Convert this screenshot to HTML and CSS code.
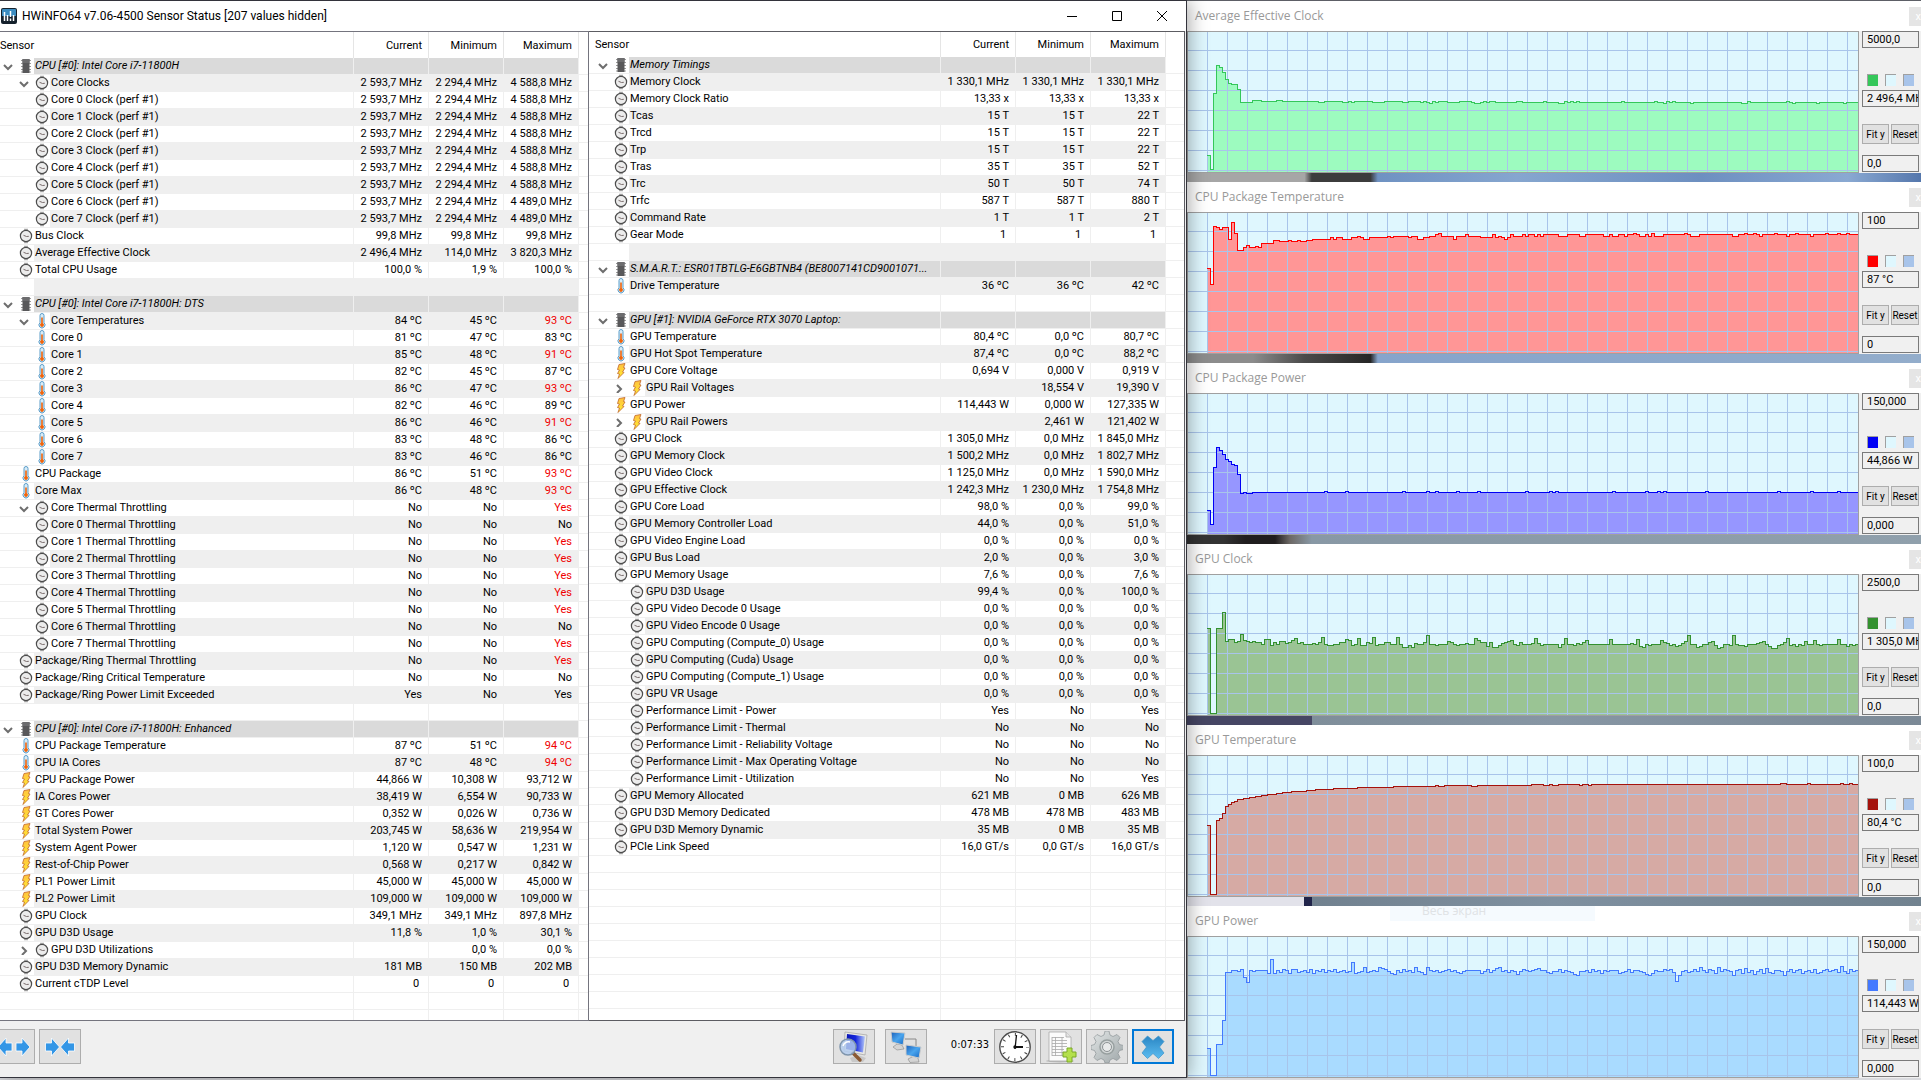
FILE: index.html
```
<!DOCTYPE html>
<html lang="en">
<head>
    <meta charset="UTF-8">
    <meta name="viewport" content="width=device-width, initial-scale=1.0">
    <title>HWiNFO64 Sensor Status</title>
    <link rel="stylesheet" href="styles.css">
</head>
<body>
    <svg class="sprites" aria-hidden="true">
        <defs>
            <linearGradient id="screen" x1="0" y1="0" x2="1" y2="1">
                <stop offset="0" stop-color="#1c5fb8"/>
                <stop offset="0.5" stop-color="#4aa5ee"/>
                <stop offset="1" stop-color="#1668c4"/>
            </linearGradient>
            <linearGradient id="cross" x1="0" y1="0" x2="0" y2="1">
                <stop offset="0" stop-color="#2a86c4"/>
                <stop offset="1" stop-color="#5cbcf0"/>
            </linearGradient>
            <linearGradient id="deep" x1="0" y1="0" x2="1" y2="0">
                <stop offset="0" stop-color="#0a14b4"/>
                <stop offset="0.5" stop-color="#1426dc"/>
                <stop offset="1" stop-color="#b4c8f8"/>
            </linearGradient>
            <linearGradient id="steel" x1="0" y1="0" x2="1" y2="1">
                <stop offset="0" stop-color="#e2e6e6"/>
                <stop offset="1" stop-color="#9ea6a8"/>
            </linearGradient>
            <linearGradient id="gold" x1="0" y1="0" x2="0" y2="1">
                <stop offset="0" stop-color="#ffc040"/>
                <stop offset="1" stop-color="#ffee30"/>
            </linearGradient>
        </defs>
        <symbol id="i-chip" viewBox="0 0 14 16">
            <path d="M2 2.500h10M2 5.500h10M2 8.500h10M2 11.500h10M2 14h10" stroke="#9a9a9a" stroke-width="1"/>
            <path d="M3.500 1h7v14h-7z" fill="#58585a"/>
            <path d="M3.500 1h7v4h-7z" fill="#6c6c6e"/>
        </symbol>
        <symbol id="i-clock" viewBox="0 0 14 16">
            <path d="M5 1.500h4M5 14.500h4" stroke="#aaa" stroke-width="1.500"/>
            <circle cx="7" cy="8" r="5.600" fill="#ececec" stroke="#4c4c4c" stroke-width="1.200"/>
            <path d="M4.500 7.300l3 1.200 2.300-.2" fill="none" stroke="#7a6c6c" stroke-width="1"/>
        </symbol>
        <symbol id="i-temp" viewBox="0 0 14 16">
            <path d="M5 2.500a2 2 0 0 1 4 0v7.200a3 3 0 1 1-4 0z" fill="#d8ecf8" stroke="#5a9cc8" stroke-width="1"/>
            <path d="M6.200 4.500h1.600v5.800a1.800 1.800 0 1 1-1.600 0z" fill="#f0640c"/>
        </symbol>
        <symbol id="i-volt" viewBox="0 0 14 16">
            <path d="M5 1.500L11 .5 9.500 4.500 11 5 8.500 9 10 9.500 4 15.500 5.500 11 3.500 10.500 5.500 7 3.500 6.500z" fill="url(#gold)" stroke="#c0662c" stroke-width=".8"/>
        </symbol>
    </svg>

    <main class="desktop">
        <section class="sensors">
            <header class="titlebar">
                <svg class="logo" viewBox="0 0 16 16" aria-hidden="true">
                    <rect width="16" height="16" rx="2" fill="#15212c"/>
                    <path d="M1 2q0-1 1-1h12q1 0 1 1v6H1z" fill="#3b8cc0"/>
                    <path d="M3.500 4v9M6.500 7v6M9.500 3v6M12.500 7v6M9.500 10.500V13" stroke="#fff" stroke-width="1.500"/>
                </svg>
                <h1>HWiNFO64 v7.06-4500 Sensor Status [207 values hidden]</h1>
                <div class="window-buttons">
                    <button type="button" aria-label="Minimize"><svg viewBox="0 0 12 12"><path d="M1 6.500h10"/></svg></button>
                    <button type="button" aria-label="Maximize"><svg viewBox="0 0 12 12"><path d="M1.500 1.500h9v9h-9z"/></svg></button>
                    <button type="button" aria-label="Close"><svg viewBox="0 0 12 12"><path d="M1 1l10 10M11 1L1 11"/></svg></button>
                </div>
            </header>

            <div class="panels">
                <div class="panel panel-left">
                    <table>
                        <colgroup><col><col class="value"><col class="value"><col class="value"><col class="rest"></colgroup>
                        <thead>
                            <tr><th>Sensor</th><th>Current</th><th>Minimum</th><th>Maximum</th><td></td></tr>
                        </thead>
                        <tbody id="left-rows"></tbody>
                    </table>
                </div>
                <div class="panel panel-right">
                    <table>
                        <colgroup><col><col class="value"><col class="value"><col class="value"><col class="rest"></colgroup>
                        <thead>
                            <tr><th>Sensor</th><th>Current</th><th>Minimum</th><th>Maximum</th><td></td></tr>
                        </thead>
                        <tbody id="right-rows"></tbody>
                    </table>
                </div>
            </div>

            <footer class="toolbar">
                <button type="button" class="tool cut" aria-label="Expand columns">
                    <svg viewBox="0 0 32 32"><path d="M0 16l8-9v5h6v8H8v5zM32 16l-8-9v5h-6v8h6v5z" fill="#3396e6" stroke="#fff" stroke-width=".8"/></svg>
                </button>
                <button type="button" class="tool" aria-label="Shrink columns">
                    <svg viewBox="0 0 32 32"><path d="M15.500 16l-8-9v5h-6v8h6v5zM16.500 16l8-9v5h6v8h-6v5z" fill="#3396e6" stroke="#fff" stroke-width=".8"/></svg>
                </button>
                <span class="spacer"></span>
                <button type="button" class="tool" aria-label="System summary">
                    <svg viewBox="0 0 32 32">
                        <path d="M12 27l8-3 8 3-3 4H14z" fill="#c8c8c8"/>
                        <path d="M7 1l22 3-2 20-21-4z" fill="#e8e8e4" stroke="#aaa" stroke-width=".8"/>
                        <path d="M9 3l18 2.500-2 16L8 18z" fill="url(#deep)"/>
                        <path d="M15 22l7 7" stroke="#8a5a34" stroke-width="3.500" stroke-linecap="round"/>
                        <circle cx="10" cy="16" r="8" fill="#b4cdee" fill-opacity=".85" stroke="#7f95ac" stroke-width="1.500"/>
                        <path d="M5 15q2-5 7-4" fill="none" stroke="#fff" stroke-width="1.500"/>
                    </svg>
                </button>
                <button type="button" class="tool network" aria-label="Remote sensors">
                    <svg viewBox="0 0 32 32">
                        <path d="M15 8h11v8" fill="none" stroke="#888" stroke-width="1"/>
                        <path d="M3 16l4-3 5 1 2 4-7 1z" fill="#d4d4d4" stroke="#777" stroke-width=".5"/>
                        <path d="M1 1l14 1-2 12L2 11z" fill="url(#screen)" stroke="#ccc" stroke-width="1"/>
                        <path d="M18 28l6-3 4 2 1 4-9 .5z" fill="#d4d4d4" stroke="#777" stroke-width=".5"/>
                        <path d="M16 14l15 2-2 11-13-3z" fill="url(#screen)" stroke="#ccc" stroke-width="1"/>
                    </svg>
                </button>
                <time class="elapsed">0:07:33</time>
                <button type="button" class="tool" aria-label="Reset clock">
                    <svg viewBox="0 0 32 32">
                        <circle cx="16" cy="16" r="15.200" fill="#fff" stroke="#4c4c4c" stroke-width="1.400"/>
                        <circle cx="16" cy="16" r="12.500" fill="none" stroke="#444" stroke-width="3" stroke-dasharray="1 5.545" stroke-dashoffset=".5"/>
                        <path d="M16 16h8" stroke="#111" stroke-width="2"/>
                        <path d="M16 18l1.500-14" stroke="#111" stroke-width="1.300"/>
                        <circle cx="16" cy="16" r="1.700" fill="#111"/>
                    </svg>
                </button>
                <button type="button" class="tool" aria-label="Log to file">
                    <svg viewBox="0 0 32 32">
                        <ellipse cx="15" cy="30" rx="14" ry="1.500" fill="#bbb"/>
                        <path d="M4 1h17l5 5v24H4z" fill="#fbfbfb" stroke="#aaa" stroke-width=".8"/>
                        <path d="M21 1v5h5" fill="#e4e4e4" stroke="#aaa" stroke-width=".8"/>
                        <path d="M7 6.500h12M7 9.500h15M7 12.500h15M7 15.500h15M7 18.500h12M7 21.500h12M7 24.500h12M7 6v19M10.500 6v19M17 6v19" stroke="#a8a8a8" stroke-width=".8"/>
                        <path d="M22 17h5v4h4v5h-4v5h-5v-5h-4v-5h4z" fill="#b4e04c" stroke="#7aa828" stroke-width="1"/>
                    </svg>
                </button>
                <button type="button" class="tool" aria-label="Settings">
                    <svg viewBox="0 0 32 32">
                        <path d="M13 4l1-4h4l1 4 3 1.500 4-2 3 3-2 4 1.500 3 4 1v4l-4 1-1.500 3 2 4-3 3-4-2-3 1.500-1 3h-4l-1-3-3-1.500-4 2-3-3 2-4L3.500 19.500 0 18.500v-4l3.500-1 1.500-3-2-4 3-3 4 2z" fill="url(#steel)" stroke="#8c9496" stroke-width=".7"/>
                        <circle cx="16" cy="16" r="7" fill="#d4d8d8" stroke="#98a0a0" stroke-width="1.500"/>
                        <circle cx="16" cy="16" r="4.500" fill="#e8eaea" stroke="#8c9294" stroke-width="1"/>
                    </svg>
                </button>
                <button type="button" class="tool active" aria-label="Close sensors">
                    <svg viewBox="0 0 32 32"><path d="M5 10.500L10.500 5 16 9.500 21.500 5 27 10.500 22.500 16 27 22 21.500 27.500 16 22.500 10.500 27.500 5 22 9.500 16z" fill="url(#cross)" stroke="#3f93c8" stroke-width=".7"/></svg>
                </button>
            </footer>
        </section>

        <section class="graphs" id="graphs"></section>
    </main>
    <script src="script.js"></script>
</body>
</html>
```
FILE: styles.css
```
* {
    box-sizing: border-box;
}

body {
    margin: 0;
    font-family: Roboto, "Liberation Sans", sans-serif;
    font-size: 11px;
    color: #000;
    background: #d9dade;
    overflow: hidden;
}

button,
input {
    font: inherit;
    color: inherit;
    padding: 0;
    margin: 0;
    border-radius: 0;
}

.sprites {
    position: absolute;
    width: 0;
    height: 0;
}

.desktop {
    display: grid;
    grid-template-columns: 1187fr 734fr;
    height: 100vh;
    padding-bottom: 2px;
}

/* sensor window */
.sensors {
    display: flex;
    flex-direction: column;
    min-width: 0;
    min-height: 0;
    position: relative;
    z-index: 1;
    background: #f0f0f0;
    border: 1px solid #33333b;
    border-left: 0;
    box-shadow: 2px 0 18px rgba(0, 0, 0, 0.35);
}

.titlebar {
    display: flex;
    align-items: center;
    height: 30px;
    padding-left: 1px;
    background: #fff;
}

.logo {
    width: 16px;
    height: 16px;
    margin-right: 5px;
}

h1,
h2 {
    margin: 0;
    font-size: 12px;
    font-weight: 400;
}

.window-buttons {
    display: flex;
    margin: 0 2px 0 auto;
}

.window-buttons button {
    width: 45px;
    height: 30px;
    border: 0;
    background: none;
}

.window-buttons svg {
    width: 12px;
    height: 12px;
    display: block;
    margin: 0 auto;
    fill: none;
    stroke: #000;
}

.panels {
    flex: 1;
    display: grid;
    grid-template-columns: 589fr 597fr;
    min-height: 0;
}

.panel {
    overflow: hidden;
    background: #fff;
    border: 1px solid #74747e;
    border-left: 0;
}

.panel-right {
    border-color: #5c5c62;
    margin-right: 1px;
}

table {
    width: 100%;
    table-layout: fixed;
    border-collapse: separate;
    border-spacing: 0;
}

col.value {
    width: 75px;
}

.panel-left col.rest {
    width: 9px;
}

.panel-right col.rest {
    width: 18px;
}

thead tr {
    height: 26px;
}

.panel-right thead tr {
    height: 25px;
}

th {
    padding: 0 6px 0 0;
    font-weight: 400;
    text-align: right;
    border-right: 1px solid #e5e5e5;
}

th:first-child {
    text-align: left;
}

.panel-right th:first-child {
    padding-left: 6px;
}

tbody tr {
    height: 17px;
}

tbody td {
    height: 17px;
    padding: 0 6px 0 0;
    line-height: 16px;
    text-align: right;
    white-space: nowrap;
    border-right: 1px solid #efefef;
    border-bottom: 1px solid #efefef;
}

tbody td:first-child {
    padding: 0;
    text-align: left;
}

tbody td:last-child {
    padding: 0;
    border-right: 0;
    background: #fff;
}

tr.striped .label,
tr.striped td.number {
    background: #efefef;
}

tr.group .label,
tr.group td.number {
    background: #dadada;
}

tr.group .label {
    font-style: italic;
}

.name {
    display: flex;
    height: 16px;
}

.slot {
    flex: none;
    width: 18px;
    padding-right: 5px;
    text-align: right;
}

.nested .slot {
    width: 34px;
}

.panel-right .slot {
    width: 24px;
}

.panel-right .nested .slot {
    width: 40px;
}

.toggle {
    display: block;
    width: 10px;
    height: 16px;
    margin-left: auto;
    border: 0;
    background: none;
}

.toggle svg {
    display: block;
    width: 10px;
    height: 10px;
    fill: none;
    stroke: #6e6e6e;
    stroke-width: 2;
}

.icon {
    flex: none;
    width: 14px;
    height: 16px;
    margin: 0 1px;
}

.label {
    flex: 1;
    min-width: 0;
    padding: 0 2px 0 1px;
    overflow: hidden;
    text-overflow: ellipsis;
}

.alert {
    color: #f00000;
}

/* toolbar */
.toolbar {
    display: flex;
    align-items: flex-start;
    gap: 4px;
    height: 56px;
    padding: 8px 12px 0 0;
    overflow: hidden;
}

.tool {
    flex: none;
    display: flex;
    align-items: center;
    justify-content: center;
    width: 42px;
    height: 35px;
    border: 1px solid #adadad;
    background: #e1e1e1;
}

.tool svg {
    width: 32px;
    height: 32px;
}

.tool.cut {
    margin-left: -7px;
}

.tool.network {
    margin-left: 6px;
}

.tool.active {
    border: 2px solid #0078d7;
}

.spacer {
    flex: 1;
}

.elapsed {
    padding: 0 1px 0 20px;
    font-family: "DejaVu Sans Condensed", "DejaVu Sans", sans-serif;
    line-height: 32px;
}

/* graph windows */
.graphs {
    display: flex;
    flex-direction: column;
    min-width: 0;
    padding-top: 1px;
    background: #5d5f66;
    overflow: hidden;
}

.graph {
    flex: none;
    position: relative;
    background: #f0f0f0;
}

.graph header {
    display: flex;
    align-items: center;
    justify-content: space-between;
    height: 30px;
    padding-left: 8px;
    background: #fff;
}

.graph h2 {
    color: #999;
    font-family: "Open Sans", "Noto Sans", sans-serif;
    line-height: 20px;
}

.close {
    width: 12px;
    height: 19px;
    border: 0;
    background: #e5e5e5;
    color: #fff;
    text-align: right;
}

.graph-body {
    display: flex;
    height: 142px;
}

.plot {
    flex: 1;
    min-width: 0;
    display: block;
    height: 142px;
    border: 1px solid #a0a0a0;
    background: #dff7fe;
}

.plot path {
    fill: none;
    shape-rendering: crispEdges;
    vector-effect: non-scaling-stroke;
}

.plot .grid {
    stroke: #a8c4ea;
}

.controls {
    flex: none;
    display: flex;
    flex-direction: column;
    width: 62px;
    padding: 0 2px 0 3px;
}

.controls input {
    width: 57px;
    height: 17px;
    padding: 0 0 0 4px;
    border: 1px solid #7a7a7a;
    background: #f0f0f0;
}

.swatches {
    display: flex;
    gap: 7px;
    padding: 26px 0 4px 5px;
}

.swatches button {
    width: 11px;
    height: 12px;
    border: 0;
    border-top: 1px solid #a0a0a0;
    border-left: 1px solid #a0a0a0;
}

.range {
    display: flex;
    gap: 2px;
    padding: 17px 0 11px;
}

.range button {
    height: 20px;
    width: 27px;
    border: 1px solid #adadad;
    background: #e1e1e1;
    font-size: 10px;
    white-space: nowrap;
}

.range button:last-child {
    width: 28px;
}

/* wallpaper showing between the windows */
.wallpaper {
    flex: none;
    height: 9px;
    background: linear-gradient(90deg, #a6a6a6 0 16%, #3c3c3c 17% 25%, #6f92c2 26%, #86a6cf 45%, #6d8fc0 70%, #8aa9d2 90%, #5577ac);
}

.wallpaper.second {
    background: linear-gradient(90deg, #8c8c8c 0 9%, #4a4a4a 16%, #262626 25%, #86a4cb 26%, #93adcb);
}

.wallpaper.third {
    background: linear-gradient(90deg, #333 0 5%, #201d1e 8% 12%, #6c6865 14%, #8898a5 17%, #90a0ac);
}

.wallpaper.fourth {
    background: linear-gradient(90deg, #464664 0 17%, #7f8e9a 17%, #8796a4 50%, #7b8996);
}

.wallpaper.fifth {
    background: linear-gradient(90deg, #e2e2ea 0 16%, #20244a 16% 17%, #71818f 17%, #7f90a0 50%, #71828f);
}

/* fading menu caption over the last window */
.ghost {
    position: absolute;
    top: 0;
    left: 203px;
    width: 205px;
    height: 15px;
    padding-left: 32px;
    background: #f5fafe;
    color: #dfe2e5;
    font-family: "Open Sans", "Noto Sans", sans-serif;
    font-size: 12px;
    line-height: 10px;
}
```
FILE: script.js
```
// level | icon | name | current | minimum | maximum
// level: g = group, 0 = sensor, 1 = nested, v / > = nested with open / closed arrow, ! = red value
const left = `
g|chip|CPU [#0]: Intel Core i7-11800H
v|clock|Core Clocks|2 593,7 MHz|2 294,4 MHz|4 588,8 MHz
1|clock|Core 0 Clock (perf #1)|2 593,7 MHz|2 294,4 MHz|4 588,8 MHz
1|clock|Core 1 Clock (perf #1)|2 593,7 MHz|2 294,4 MHz|4 588,8 MHz
1|clock|Core 2 Clock (perf #1)|2 593,7 MHz|2 294,4 MHz|4 588,8 MHz
1|clock|Core 3 Clock (perf #1)|2 593,7 MHz|2 294,4 MHz|4 588,8 MHz
1|clock|Core 4 Clock (perf #1)|2 593,7 MHz|2 294,4 MHz|4 588,8 MHz
1|clock|Core 5 Clock (perf #1)|2 593,7 MHz|2 294,4 MHz|4 588,8 MHz
1|clock|Core 6 Clock (perf #1)|2 593,7 MHz|2 294,4 MHz|4 489,0 MHz
1|clock|Core 7 Clock (perf #1)|2 593,7 MHz|2 294,4 MHz|4 489,0 MHz
0|clock|Bus Clock|99,8 MHz|99,8 MHz|99,8 MHz
0|clock|Average Effective Clock|2 496,4 MHz|114,0 MHz|3 820,3 MHz
0|clock|Total CPU Usage|100,0 %|1,9 %|100,0 %
-
g|chip|CPU [#0]: Intel Core i7-11800H: DTS
v|temp|Core Temperatures|84 °C|45 °C|!93 °C
1|temp|Core 0|81 °C|47 °C|83 °C
1|temp|Core 1|85 °C|48 °C|!91 °C
1|temp|Core 2|82 °C|45 °C|87 °C
1|temp|Core 3|86 °C|47 °C|!93 °C
1|temp|Core 4|82 °C|46 °C|89 °C
1|temp|Core 5|86 °C|46 °C|!91 °C
1|temp|Core 6|83 °C|48 °C|86 °C
1|temp|Core 7|83 °C|46 °C|86 °C
0|temp|CPU Package|86 °C|51 °C|!93 °C
0|temp|Core Max|86 °C|48 °C|!93 °C
v|clock|Core Thermal Throttling|No|No|!Yes
1|clock|Core 0 Thermal Throttling|No|No|No
1|clock|Core 1 Thermal Throttling|No|No|!Yes
1|clock|Core 2 Thermal Throttling|No|No|!Yes
1|clock|Core 3 Thermal Throttling|No|No|!Yes
1|clock|Core 4 Thermal Throttling|No|No|!Yes
1|clock|Core 5 Thermal Throttling|No|No|!Yes
1|clock|Core 6 Thermal Throttling|No|No|No
1|clock|Core 7 Thermal Throttling|No|No|!Yes
0|clock|Package/Ring Thermal Throttling|No|No|!Yes
0|clock|Package/Ring Critical Temperature|No|No|No
0|clock|Package/Ring Power Limit Exceeded|Yes|No|Yes
-
g|chip|CPU [#0]: Intel Core i7-11800H: Enhanced
0|temp|CPU Package Temperature|87 °C|51 °C|!94 °C
0|temp|CPU IA Cores|87 °C|48 °C|!94 °C
0|volt|CPU Package Power|44,866 W|10,308 W|93,712 W
0|volt|IA Cores Power|38,419 W|6,554 W|90,733 W
0|volt|GT Cores Power|0,352 W|0,026 W|0,736 W
0|volt|Total System Power|203,745 W|58,636 W|219,954 W
0|volt|System Agent Power|1,120 W|0,547 W|1,231 W
0|volt|Rest-of-Chip Power|0,568 W|0,217 W|0,842 W
0|volt|PL1 Power Limit|45,000 W|45,000 W|45,000 W
0|volt|PL2 Power Limit|109,000 W|109,000 W|109,000 W
0|clock|GPU Clock|349,1 MHz|349,1 MHz|897,8 MHz
0|clock|GPU D3D Usage|11,8 %|1,0 %|30,1 %
>|clock|GPU D3D Utilizations||0,0 %|0,0 %
0|clock|GPU D3D Memory Dynamic|181 MB|150 MB|202 MB
0|clock|Current cTDP Level|0 |0 |0 `;

const right = `
g|chip|Memory Timings
0|clock|Memory Clock|1 330,1 MHz|1 330,1 MHz|1 330,1 MHz
0|clock|Memory Clock Ratio|13,33 x|13,33 x|13,33 x
0|clock|Tcas|15 T|15 T|22 T
0|clock|Trcd|15 T|15 T|22 T
0|clock|Trp|15 T|15 T|22 T
0|clock|Tras|35 T|35 T|52 T
0|clock|Trc|50 T|50 T|74 T
0|clock|Trfc|587 T|587 T|880 T
0|clock|Command Rate|1 T|1 T|2 T
0|clock|Gear Mode|1 |1 |1 
-
g|chip|S.M.A.R.T.: ESR01TBTLG-E6GBTNB4 (BE8007141CD9001071...
0|temp|Drive Temperature|36 °C|36 °C|42 °C
-
g|chip|GPU [#1]: NVIDIA GeForce RTX 3070 Laptop:
0|temp|GPU Temperature|80,4 °C|0,0 °C|80,7 °C
0|temp|GPU Hot Spot Temperature|87,4 °C|0,0 °C|88,2 °C
0|volt|GPU Core Voltage|0,694 V|0,000 V|0,919 V
>|volt|GPU Rail Voltages||18,554 V|19,390 V
0|volt|GPU Power|114,443 W|0,000 W|127,335 W
>|volt|GPU Rail Powers||2,461 W|121,402 W
0|clock|GPU Clock|1 305,0 MHz|0,0 MHz|1 845,0 MHz
0|clock|GPU Memory Clock|1 500,2 MHz|0,0 MHz|1 802,7 MHz
0|clock|GPU Video Clock|1 125,0 MHz|0,0 MHz|1 590,0 MHz
0|clock|GPU Effective Clock|1 242,3 MHz|1 230,0 MHz|1 754,8 MHz
0|clock|GPU Core Load|98,0 %|0,0 %|99,0 %
0|clock|GPU Memory Controller Load|44,0 %|0,0 %|51,0 %
0|clock|GPU Video Engine Load|0,0 %|0,0 %|0,0 %
0|clock|GPU Bus Load|2,0 %|0,0 %|3,0 %
0|clock|GPU Memory Usage|7,6 %|0,0 %|7,6 %
1|clock|GPU D3D Usage|99,4 %|0,0 %|100,0 %
1|clock|GPU Video Decode 0 Usage|0,0 %|0,0 %|0,0 %
1|clock|GPU Video Encode 0 Usage|0,0 %|0,0 %|0,0 %
1|clock|GPU Computing (Compute_0) Usage|0,0 %|0,0 %|0,0 %
1|clock|GPU Computing (Cuda) Usage|0,0 %|0,0 %|0,0 %
1|clock|GPU Computing (Compute_1) Usage|0,0 %|0,0 %|0,0 %
1|clock|GPU VR Usage|0,0 %|0,0 %|0,0 %
1|clock|Performance Limit - Power|Yes|No|Yes
1|clock|Performance Limit - Thermal|No|No|No
1|clock|Performance Limit - Reliability Voltage|No|No|No
1|clock|Performance Limit - Max Operating Voltage|No|No|No
1|clock|Performance Limit - Utilization|No|No|Yes
0|clock|GPU Memory Allocated|621 MB|0 MB|626 MB
0|clock|GPU D3D Memory Dedicated|478 MB|478 MB|483 MB
0|clock|GPU D3D Memory Dynamic|35 MB|0 MB|35 MB
0|clock|PCIe Link Speed|16,0 GT/s|0,0 GT/s|16,0 GT/s`;

const arrows = { open: 'M1 4l4 4 4-4', closed: 'M3 2l4 4-4 4' };

function rowHtml(line, index) {
    const [level, icon = '', name = '', ...values] = line.split('|');
    const classes = [];
    if (level === 'g') classes.push('group');
    else if (index % 2) classes.push('striped');
    if ('1v>'.includes(level)) classes.push('nested');

    let toggle = '';
    if ('gv>'.includes(level)) {
        const open = level !== '>';
        toggle = `<button type="button" class="toggle" aria-expanded="${open}" aria-label="${name}">
            <svg viewBox="0 0 10 10"><path d="${open ? arrows.open : arrows.closed}"/></svg></button>`;
    }
    const cells = [0, 1, 2].map(i => {
        const value = values[i] || '';
        const alert = value.startsWith('!');
        const text = value.replace('!', '').replace(/ $/, '\u00a0').replace('°', 'º');
        return `<td class="number${alert ? ' alert' : ''}">${text}</td>`;
    });
    const picture = icon ? `<svg class="icon" aria-hidden="true"><use href="#i-${icon}"/></svg>` : '<span class="icon"></span>';
    return `<tr class="${classes.join(' ')}"><td><div class="name"><span class="slot">${toggle}</span>${picture}<span class="label">${name}</span></div></td>${cells.join('')}<td></td></tr>`;
}

function fillTable(id, text, emptyRows) {
    let html = text.slice(1).split('\n').map(rowHtml).join('');
    for (let i = 0; i < emptyRows; i++) {
        html += '<tr><td></td><td></td><td></td><td></td><td></td></tr>';
    }
    document.getElementById(id).innerHTML = html;
}

fillTable('left-rows', left, 3);
fillTable('right-rows', right, 12);

// Each series holds one height per sample, "69*4" repeats a sample four times
const graphs = [
    {
        title: 'Average Effective Clock', max: '5000,0', min: '0,0', value: '2 496,4 MHz', line: '#35c75a', fill: '#9dfbbf', gap: '',
        series: '123 137 61 33 35 40 47 51 52 52 57 70*4 68*3 69*5 68*2 69*12 70*2 69*6 70*2 69 70 69*6 70*4 69*6 70*2 69*4 70 69 70 71 69 70 69*3 70*4 69*4 70 71*2 70 69 70 69*2 70*7 69*2 70*7 69 70*4 71*2 69 70 69 70 69 70*14 69 70*10 69 70*2 71 69 70 69 70*5 71 70*16 71*2 69 70*12 69 70 71 70*7 71 70*8 71 70*8'
    },
    {
        title: 'CPU Package Temperature', max: '100', min: '0', value: '87 °C', line: '#ff0000', fill: '#ff9696', gap: 'second',
        series: '55 71 13 14 16 14 14 26 9 20 37*2 34 32 34*2 33 34 30*4 27*2 28*3 27 28*2 27 28*2 27*2 26*4 26*2 24 26 24*2 26*3 24*2 23 24 26*2 24*6 23 24 23*5 24 23*2 26*2 24*2 23*2 21 20 23*4 26 23*3 21 23*4 24*4 21 24 23 24 26 24 21*1 23*3 21 23 21*2 23 21 23 21*5 23*3 21*4 23*2 21*6 23*2 21 23*2 21*2 23 21*2 20 21 23*2 21 23 20 23*3 21*7 20 21 23*3 21*11 23*2 21*2 20 21*2 20 21 23 21*4 20 21*3 23 21*2 20 21*4 23 21*4 20 21*3 20 21*2 20 21*3 19'
    },
    {
        title: 'CPU Package Power', max: '150,000', min: '0,000', value: '44,866 W', line: '#0000f5', fill: '#9696ff', gap: 'third',
        series: '116 130 73 53 56 60 65 67 70 71 80 99 98 99*2 98*24 97 98*6 97 98*18 97 98*7 97 98*2 97 98*6 97 98*6 97 98*15 97 98*7 97 98 97 98*18 97 98*10 97 98*3 97 98 97 98*13 97 98*23 97 98*10 97 98*8 97 98*6'
    },
    {
        title: 'GPU Clock', max: '2500,0', min: '0,0', value: '1 305,0 MHz', line: '#33912f', fill: '#9ac494', gap: 'fourth',
        series: '53 138*2 53*2 37 66 64 64 67 66 59 65 66 67 66 67*2 69 64 64 70 67 69 66 66 68 67 65 63 68 67 69*3 68 69 67 62 69 70*2 69*2 67 67 64 65 70 69 63 70*2 67 68 62 70 69*2 67 67 69*2 62 69 72 72 70 72 68 69*2 67 60 69*2 70 69*3 66 67 69 70 69*2 68 69*2 63 65 67 67 71 67 72 72 70 68 67 66 65 69 70 67 69*3 68 63 68 70 69*5 72 69 63 69*2 70 68 69 67 65 69*7 64 69*6 68 69 64 71 72 69 70 69*3 65 67 68 70 69 71 70 68 66 60 69*2 72 71 69 69 67 66 70 73 72 69*2 70 60 69 70*2 71 69*3 68 67 66 69 71 73*2 70 69 67 63 70 69 71 69 70 66 69*2 65 69 70 69*5 64 69*2 71 69 70 69 68 67 66'
    },
    {
        title: 'GPU Temperature', max: '100,0', min: '0,0', value: '80,4 °C', line: '#a5120c', fill: '#d6aaa4', gap: 'fifth',
        series: '69 138*2 64 62 57 50 48 46 45 43*2 42*2 41*2 40*2 39*2 38*3 37*2 36*3 35*5 34*3 33*6 32*8 31*12 30*14 29 30*2 29*9 30*2 29*18 28*4 29*2 28 29*2 28*7 29 28*2 29 28*63 27*2 28*7 27 28*10 27 28*2 27 28*2'
    },
    {
        title: 'GPU Power', max: '150,000', min: '0,000', value: '114,443 W', line: '#4379ff', fill: '#a9dbff', gap: '',
        series: '111 138*2 107*2 83 35*2 33*2 34 32 40 45 33 34 33*4 36 22 36 33 35 32 33 36 32 32 35 34 33 35 32 36 33 34 32 35 33 34 32 35 34 33 35 34 25 36 35 34 30 35 34 33 34 30 31 32 34 36 37 33 35 32 34 33 35 30 34 35 37 30 33 34 33 35 34 33 32 34 33 35 36 34 33*5 36 34 32 35 33 31 30 34 33 35 33 34 37 34 32 33 34 33 32 31 33*2 35 36 34 34 32 35 33 34 35 37 38 34 34 33 35 32 34 33 36 33 34 33*3 36 35 34 32 35 33 33 34 35 37 38 36 33 34 34 32 33 32 35 44 38 34 33 35 34 32 34 30 33 35 32 33 36 30 34 32 33 34 38 33 32 36 31 35 33 37 34 32 36 31 35 36 33 33 34 38 34 32 35 33 32 36 34 33 35 32 36 35 33 32 34 33 32 35 29 34 36 32 34 33 33'
    }
];

const START = 19, STEP = 3, WIDTH = 670, HEIGHT = 140;

function gridPath() {
    let d = '';
    for (let x = START; x < WIDTH; x += 20) d += `M${x + 0.5} 0V${HEIGHT}`;
    for (let y = 18; y < HEIGHT; y += 20) d += `M0 ${y + 0.5}H${WIDTH}`;
    return d;
}

function seriesPath(series) {
    const samples = series.split(' ').flatMap(part => {
        const [level, count = 1] = part.split('*').map(Number);
        return Array(count).fill(level);
    });
    let d = '';
    samples.slice(0, 217).forEach((level, i) => {
        d += `${i ? 'V' : `M${START} `}${level + 0.5}H${START + (i + 1) * STEP}`;
    });
    return d + `H${WIDTH}`;
}

document.getElementById('graphs').innerHTML = graphs.map((g, i) => {
    const line = seriesPath(g.series);
    return `<article class="graph">
        <header><h2>${g.title}</h2><button type="button" class="close" aria-label="Close ${g.title}">x</button></header>
        ${i === 5 ? '<span class="ghost">Весь экран</span>' : ''}
        <div class="graph-body">
            <svg class="plot" viewBox="0 0 ${WIDTH} ${HEIGHT}" preserveAspectRatio="none">
                <path d="${line}V${HEIGHT}H${START}z" style="fill:${g.fill}"/>
                <path class="grid" d="${gridPath()}"/>
                <path d="${line}" style="stroke:${g.line}"/>
            </svg>
            <div class="controls">
                <input aria-label="${g.title} maximum" value="${g.max}">
                <div class="swatches">
                    <button type="button" aria-label="Line colour" style="background:${g.line}"></button>
                    <button type="button" aria-label="Background colour" style="background:#dff7fe"></button>
                    <button type="button" aria-label="Grid colour" style="background:#a8c4ea"></button>
                </div>
                <input aria-label="${g.title} current" value="${g.value}" readonly>
                <div class="range"><button type="button">Fit y</button><button type="button">Reset</button></div>
                <input aria-label="${g.title} minimum" value="${g.min}">
            </div>
        </div>
    </article>${i < 5 ? `<div class="wallpaper ${g.gap}"></div>` : ''}`;
}).join('');
```
